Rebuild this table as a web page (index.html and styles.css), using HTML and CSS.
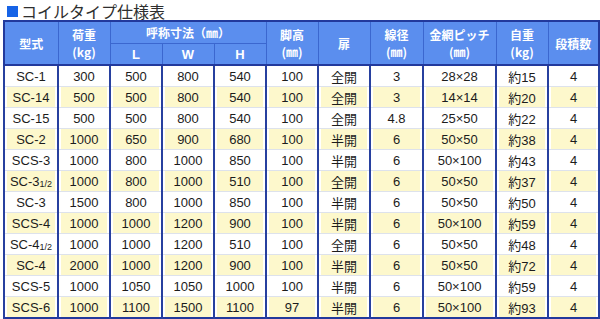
FILE: index.html
```html
<!DOCTYPE html>
<html lang="ja">
<head>
<meta charset="utf-8">
<title>コイルタイプ仕様表</title>
<link rel="stylesheet" href="styles.css">
</head>
<body>
<div class="page">
  <h1 class="title"><span class="mark"></span>コイルタイプ仕様表</h1>
  <table class="spec">
    <colgroup>
      <col class="c54"><col class="c52"><col class="c52"><col class="c52"><col class="c52"><col class="c52"><col class="c52"><col class="c53"><col class="c73"><col class="c52"><col class="c51">
    </colgroup>
    <thead>
      <tr class="h1">
        <th rowspan="2">型式</th>
        <th rowspan="2">荷重<br>(kg)</th>
        <th colspan="3" class="group">呼称寸法（㎜）</th>
        <th rowspan="2">脚高<br>(㎜)</th>
        <th rowspan="2">扉</th>
        <th rowspan="2">線径<br>(㎜)</th>
        <th rowspan="2">金網ピッチ<br>(㎜)</th>
        <th rowspan="2">自重<br>(kg)</th>
        <th rowspan="2">段積数</th>
      </tr>
      <tr class="h2">
        <th>L</th><th>W</th><th>H</th>
      </tr>
    </thead>
    <tbody>
      <tr><td>SC-1</td><td>300</td><td>500</td><td>800</td><td>540</td><td>100</td><td>全開</td><td>3</td><td>28×28</td><td>約15</td><td>4</td></tr>
      <tr class="alt"><td>SC-14</td><td>500</td><td>500</td><td>800</td><td>540</td><td>100</td><td>全開</td><td>3</td><td>14×14</td><td>約20</td><td>4</td></tr>
      <tr><td>SC-15</td><td>500</td><td>500</td><td>800</td><td>540</td><td>100</td><td>全開</td><td>4.8</td><td>25×50</td><td>約22</td><td>4</td></tr>
      <tr class="alt"><td>SC-2</td><td>1000</td><td>650</td><td>900</td><td>680</td><td>100</td><td>半開</td><td>6</td><td>50×50</td><td>約38</td><td>4</td></tr>
      <tr><td>SCS-3</td><td>1000</td><td>800</td><td>1000</td><td>850</td><td>100</td><td>半開</td><td>6</td><td>50×100</td><td>約43</td><td>4</td></tr>
      <tr class="alt"><td>SC-3<span class="frac">1/2</span></td><td>1000</td><td>800</td><td>1000</td><td>510</td><td>100</td><td>全開</td><td>6</td><td>50×50</td><td>約37</td><td>4</td></tr>
      <tr><td>SC-3</td><td>1500</td><td>800</td><td>1000</td><td>850</td><td>100</td><td>半開</td><td>6</td><td>50×50</td><td>約50</td><td>4</td></tr>
      <tr class="alt"><td>SCS-4</td><td>1000</td><td>1000</td><td>1200</td><td>900</td><td>100</td><td>半開</td><td>6</td><td>50×100</td><td>約59</td><td>4</td></tr>
      <tr><td>SC-4<span class="frac">1/2</span></td><td>1000</td><td>1000</td><td>1200</td><td>510</td><td>100</td><td>全開</td><td>6</td><td>50×50</td><td>約48</td><td>4</td></tr>
      <tr class="alt"><td>SC-4</td><td>2000</td><td>1000</td><td>1200</td><td>900</td><td>100</td><td>半開</td><td>6</td><td>50×50</td><td>約72</td><td>4</td></tr>
      <tr><td>SCS-5</td><td>1000</td><td>1050</td><td>1050</td><td>1000</td><td>100</td><td>半開</td><td>6</td><td>50×100</td><td>約59</td><td>4</td></tr>
      <tr class="alt"><td>SCS-6</td><td>1000</td><td>1100</td><td>1500</td><td>1100</td><td>97</td><td>半開</td><td>6</td><td>50×100</td><td>約93</td><td>4</td></tr>
    </tbody>
  </table>
</div>
</body>
</html>
```

FILE: styles.css
```css
html, body {
  margin: 0;
  padding: 0;
  background: #ffffff;
}

.page {
  padding: 0 2px 0 3px;
  font-family: "Liberation Sans", "Noto Sans CJK JP", sans-serif;
}

.title {
  margin: 0;
  height: 20px;
  display: flex;
  align-items: center;
  font-family: "Noto Sans CJK JP", sans-serif;
  font-weight: normal;
  font-size: 16px;
  line-height: 17px;
  color: #2e2e2e;
  padding-left: 4px;
  padding-top: 3px;
  box-sizing: border-box;
}

.mark {
  display: inline-block;
  width: 11px;
  height: 11px;
  background: #1663e6;
  margin-right: 3px;
}

.spec {
  width: 595px;
  table-layout: fixed;
  border-collapse: collapse;
  border: 2px solid #22399c;
}

.c54 { width: 54px; }
.c52 { width: 52px; }
.c53 { width: 53px; }
.c73 { width: 73px; }
.c51 { width: 51px; }

.spec th {
  background: #5b8eee;
  color: #ffffff;
  font-family: "Noto Sans CJK JP", sans-serif;
  font-weight: bold;
  font-size: 12px;
  line-height: 17px;
  padding: 0;
  border: 1px solid #3b67cf;
  text-align: center;
  vertical-align: middle;
}

.spec .h1 th {
  height: 21px;
}

.spec .h1 th.group {
  line-height: 15px;
}

.spec .h2 th {
  height: 20px;
  line-height: 15px;
  font-family: "Liberation Sans", sans-serif;
  font-size: 13px;
}

.spec thead th[rowspan="2"],
.spec .h2 th {
  border-bottom: 2px solid #22399c;
}

.spec td {
  height: 20px;
  padding: 0;
  text-align: center;
  vertical-align: middle;
  font-size: 13px;
  color: #1c1c1c;
  border-left: 2px solid #27409f;
  border-right: 2px solid #27409f;
  border-top: 1px solid #dde2ec;
  background: #ffffff;
}

.spec tr.alt td {
  background: #fdf8cc;
  box-shadow: inset 2px 0 #ffffff, inset -2px 0 #ffffff;
}

.frac {
  font-size: 9px;
  vertical-align: -1px;
}
```
